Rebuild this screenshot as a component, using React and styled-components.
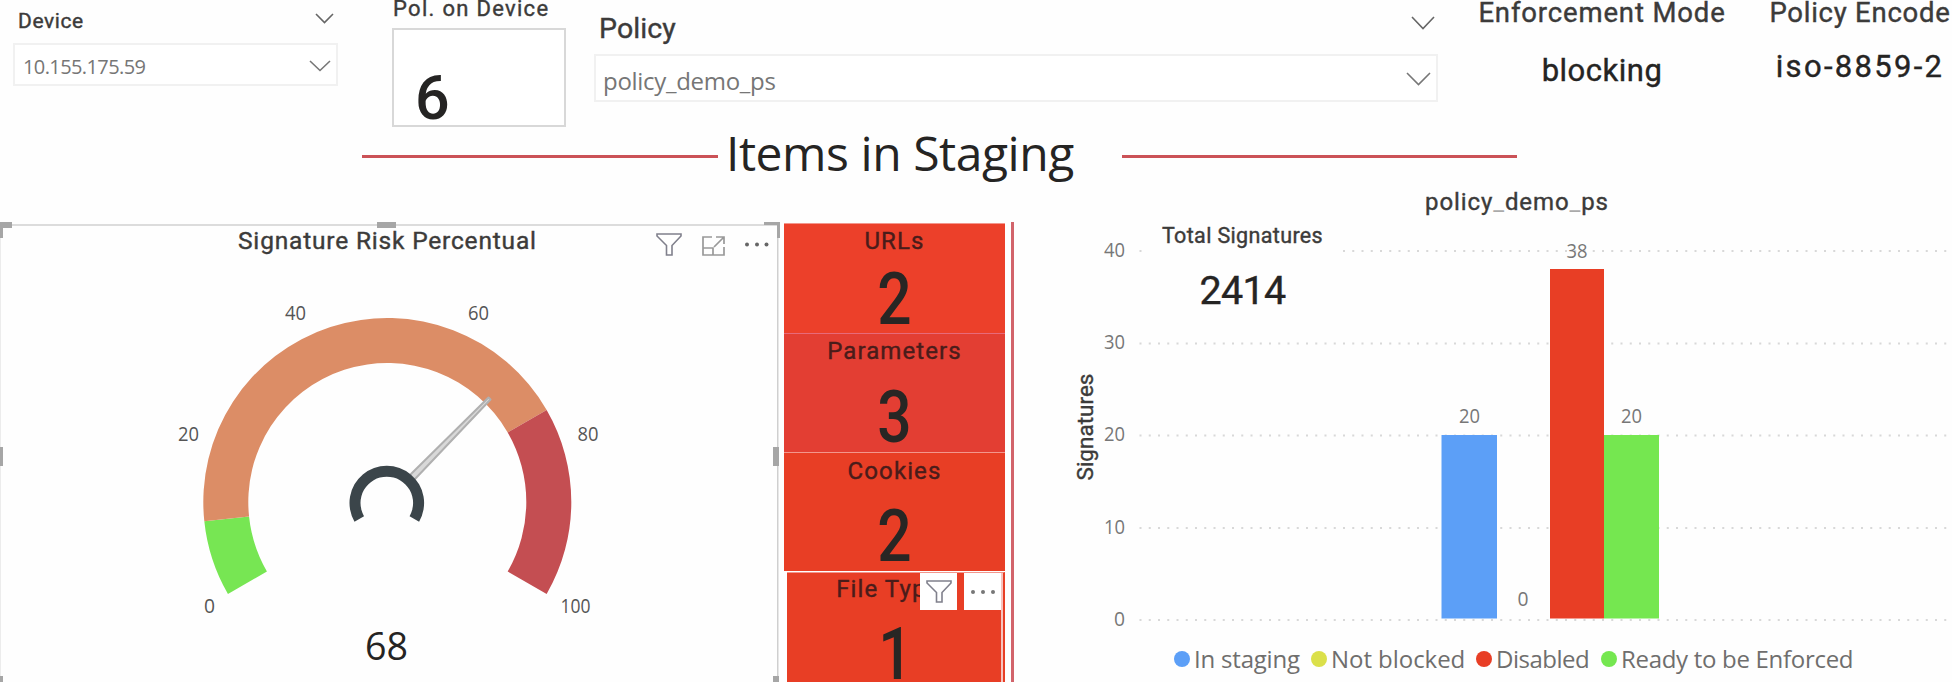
import React from "react";
import styled, { createGlobalStyle } from "styled-components";

const DIN = `Roboto, "Liberation Sans", sans-serif`;
const SEGOE = `"Open Sans", "Noto Sans", sans-serif`;

const GlobalStyle = createGlobalStyle`
  * { box-sizing: border-box; }
  html, body { margin: 0; padding: 0; }
  body { width: 1952px; height: 682px; overflow: hidden; background: #fefefe; }
`;

const Page = styled.div`
  width: 1952px;
  height: 682px;
  overflow: hidden;
  display: flex;
  flex-direction: column;
  background: #fefefe;
  font-family: ${DIN};
  color: #252423;
`;

const Header = styled.header`
  height: 128px;
  flex: none;
  display: flex;
  align-items: flex-start;
`;

const Field = styled.section`
  display: flex;
  flex-direction: column;
  flex: none;
  width: ${(p) => p.$width}px;
  margin-left: ${(p) => p.$gap}px;
`;

const FieldHead = styled.div`
  display: flex;
  justify-content: space-between;
  height: ${(p) => p.$height}px;
  padding: ${(p) => p.$pad};
`;

const DinLabel = styled.span`
  font-size: ${(p) => p.$size}px;
  font-weight: ${(p) => p.$weight || 400};
  letter-spacing: ${(p) => p.$spacing || 0}px;
  line-height: ${(p) => p.$line}px;
  white-space: nowrap;
  color: ${(p) => p.$color || "#3c3b3a"};
  -webkit-text-stroke: ${(p) => (p.$weight ? 0 : 0.4)}px currentColor;
`;

const Select = styled.div`
  display: flex;
  justify-content: space-between;
  height: ${(p) => p.$height}px;
  padding: ${(p) => p.$pad};
  border: 2px solid #f1f1f1;
  background: #fff;
`;

const SelectValue = styled.span`
  font-family: ${SEGOE};
  font-size: ${(p) => p.$size}px;
  letter-spacing: ${(p) => p.$spacing}px;
  line-height: ${(p) => p.$line}px;
  color: #767676;
`;

const CountBox = styled.div`
  height: 99px;
  padding: 41px 0 0 21px;
  border: 2px solid #d8d8d8;
  background: #fff;
  display: flex;
`;

const Metric = styled.section`
  display: flex;
  flex-direction: column;
  align-items: center;
  flex: none;
  width: ${(p) => p.$width}px;
  margin-left: ${(p) => p.$gap}px;
  gap: ${(p) => p.$space}px;
`;

const SectionHeading = styled.div`
  height: 56px;
  flex: none;
  display: flex;
  align-items: center;
  padding-left: 362px;
`;

const Rule = styled.div`
  width: ${(p) => p.$width}px;
  height: 3px;
  background: #cb5257;
`;

const HeadingText = styled.h1`
  margin: 0;
  padding: 0 0 6px 8px;
  width: 404px;
  font-family: ${SEGOE};
  font-size: 48px;
  font-weight: 400;
  line-height: 52px;
  letter-spacing: -0.45px;
  white-space: nowrap;
`;

const Main = styled.main`
  flex: 1;
  display: flex;
  align-items: flex-start;
`;

const GaugePanel = styled.section`
  width: 780px;
  height: 460px;
  margin-top: 38px;
  flex: none;
`;

const Stack = styled.section`
  width: 221px;
  height: 459px;
  margin: 39px 0 0 4px;
  flex: none;
  display: flex;
  flex-direction: column;
`;

const Tile = styled.div`
  position: relative;
  height: ${(p) => p.$height}px;
  flex: none;
  display: flex;
  flex-direction: column;
  align-items: center;
  padding-top: ${(p) => p.$top}px;
  border-top: 1px solid ${(p) => p.$edge};
  background: ${(p) => p.$color};
`;

const InsetTile = styled(Tile)`
  margin: 1px 0 0 3px;
  border-right: 2px solid #e83e25;
  overflow: hidden;
`;

const TileValue = styled.span`
  font-size: 72px;
  font-weight: 500;
  line-height: 60px;
  margin-top: ${(p) => p.$gap}px;
  transform: scaleX(0.84);
  color: #282624;
`;

const TileTools = styled.div`
  position: absolute;
  top: 0;
  right: 0;
  height: 110px;
  border-right: 2px solid #f6c4c0;
  display: flex;
  gap: 7px;
`;

const ToolButton = styled.button`
  width: 37px;
  height: 37px;
  padding: 0;
  border: 0;
  background: #fff;
  display: flex;
  align-items: center;
  justify-content: center;
`;

const Divider = styled.div`
  width: 3px;
  height: 460px;
  margin: 38px 0 0 6px;
  flex: none;
  background: #d2646b;
`;

const ChartPanel = styled.section`
  position: relative;
  width: 938px;
  height: 498px;
  flex: none;
`;

const TotalCard = styled.div`
  position: absolute;
  left: 131px;
  top: 37px;
  width: 195px;
  height: 100px;
  display: flex;
  flex-direction: column;
  align-items: center;
  gap: 17px;
  background: #fefefe;
`;

const Legend = styled.div`
  display: flex;
  padding-left: 160px;
  margin-top: -2px;
`;

const LegendItem = styled.div`
  display: flex;
  align-items: center;
  gap: 4px;
  width: ${(p) => p.$width}px;
  height: 34px;
  font-family: ${SEGOE};
  font-size: 24px;
  letter-spacing: ${(p) => p.$spacing}px;
  line-height: 32px;
  white-space: nowrap;
  color: #6f6e6d;

  &::before {
    content: "";
    flex: none;
    width: 16px;
    height: 16px;
    border-radius: 50%;
    background: ${(p) => p.$color};
  }
`;

const Drawing = styled.svg`
  display: block;
  flex: none;
  margin: ${(p) => p.$margin || 0};
`;

const ChartTitle = styled.text`
  font-family: ${DIN};
  font-size: ${(p) => p.$size}px;
  fill: #3c3b3a;
  stroke: #3c3b3a;
  stroke-width: 0.4px;
`;

function Chevron({ w, h, color = "#666", margin }) {
  return (
    <Drawing width={w} height={h} $margin={margin} fill="none" stroke={color} strokeWidth="1.6">
      <path d={`M1 1L${w / 2} ${h - 1.5}L${w - 1} 1`} />
    </Drawing>
  );
}

function FunnelShape({ x = 0, y = 0 }) {
  return (
    <path
      transform={`translate(${x} ${y})`}
      d="M1 1H25V3L16 12.5V22H10.500V12.500L1 3Z"
      fill="#fff"
      stroke="#80808c"
      strokeWidth="1.6"
    />
  );
}

const polar = (cx, cy, r, pct) => {
  const a = ((210 - pct * 2.4) * Math.PI) / 180;
  return `${(cx + r * Math.cos(a)).toFixed(2)} ${(cy - r * Math.sin(a)).toFixed(2)}`;
};

const ring = (cx, cy, ro, ri, from, to) => {
  const large = (to - from) * 2.4 > 180 ? 1 : 0;
  return `M${polar(cx, cy, ro, from)}A${ro} ${ro} 0 ${large} 1 ${polar(cx, cy, ro, to)}L${polar(cx, cy, ri, to)}A${ri} ${ri} 0 ${large} 0 ${polar(cx, cy, ri, from)}Z`;
};

const gaugeTicks = [
  ["0", 204, 390.5, 10],
  ["20", 178, 218.5, 20],
  ["40", 285, 97.5, 20],
  ["60", 468, 97.5, 20],
  ["80", 577.5, 218.5, 20],
  ["100", 560.5, 390.5, 29],
];

function Gauge() {
  return (
    <GaugePanel>
      <Drawing width="780" height="460">
        <rect x="0" y="2" width="779" height="2" fill="#dcdcdc" />
        <rect x="0" y="4" width="1" height="456" fill="#ececec" />
        <rect x="777" y="4" width="1.5" height="456" fill="#cfcfcf" />
        <g fill="#a6a6a6">
          <path d="M0 0H12V6H3V16H0Z" />
          <rect x="377" y="0" width="19" height="6" />
          <path d="M764 0H780V16H777V3H764Z" />
          <rect x="0" y="225" width="3" height="19" />
          <rect x="0" y="454" width="3" height="6" />
          <rect x="773" y="225" width="6" height="19" />
          <rect x="773" y="454" width="6" height="6" />
        </g>
        <ChartTitle x="238" y="27" $size={24.5} textLength="298">
          Signature Risk Percentual
        </ChartTitle>
        <FunnelShape x={656} y={11} />
        <g fill="none" stroke="#999" strokeWidth="1.700">
          <path d="M712 15H703V33H724V25M703 26H713V33M716 15H724V22M724 15L714 25" />
        </g>
        <g fill="#666">
          <circle cx="747" cy="22.500" r="2" />
          <circle cx="757" cy="22.500" r="2" />
          <circle cx="766.500" cy="22.500" r="2" />
        </g>
        <path d={ring(387.3, 280, 184, 139, 0, 10)} fill="#77e653" />
        <path d={ring(387.3, 280, 184, 139, 10, 75)} fill="#dc8d66" />
        <path d={ring(387.3, 280, 184, 139, 75, 100)} fill="#c44e52" />
        <path
          d="M410.500 252.500L488.500 175.500L490.500 177.500L415 257"
          fill="#d8d8d8"
          stroke="#b0b0b0"
          strokeWidth="2"
          strokeLinejoin="round"
        />
        <path d={ring(386.8, 281, 37.3, 26.3, 0, 100)} fill="#3b454a" />
        <g fontFamily={SEGOE} fontSize="20" fill="#555">
          {gaugeTicks.map(([t, x, y, w]) => (
            <text key={t} x={x} y={y} textLength={w + 1} lengthAdjust="spacingAndGlyphs">{t}</text>
          ))}
        </g>
        <text x="365" y="438" fontFamily={SEGOE} fontSize="39" fill="#252423" textLength="43" lengthAdjust="spacingAndGlyphs">68</text>
      </Drawing>
    </GaugePanel>
  );
}

const gridRows = [
  ["40", 67],
  ["30", 159.5],
  ["20", 251.5],
  ["10", 344],
  ["0", 436],
];

const bars = [
  { label: "20", x: 427.5, w: 55.5, top: 251, color: "#5c9ff7", tx: 445, ty: 238.5 },
  { label: "0", x: 482, w: 0, top: 434.5, color: "#dbe04a", tx: 503.5, ty: 422 },
  { label: "38", x: 536, w: 54, top: 85, color: "#e83e25", tx: 552.5, ty: 73.5 },
  { label: "20", x: 590, w: 55, top: 251, color: "#75e750", tx: 607, ty: 238.5 },
];

const legend = [
  ["In staging", "#5c9ff7", 137, -0.2],
  ["Not blocked", "#dbe04a", 165, -0.05],
  ["Disabled", "#e83e25", 125, -0.5],
  ["Ready to be Enforced", "#75e750", 260, -0.3],
];

function SignatureChart() {
  return (
    <ChartPanel>
      <Drawing width="938" height="460">
        {gridRows.map(([t, y]) => (
          <g key={t}>
            <text
              x={t === "0" ? 100 : 90}
              y={y + 5.5}
              fontFamily={SEGOE}
              fontSize="20"
              fill="#777"
              textLength={t === "0" ? 11 : 21}
              lengthAdjust="spacingAndGlyphs"
            >
              {t}
            </text>
            <line x1="125.500" x2="933" y1={y} y2={y} stroke="#d8d8d8" strokeWidth="2" strokeDasharray="2 7.25" />
          </g>
        ))}
        {bars.map((b) => (
          <g key={b.x}>
            <rect x={b.x} y={b.top} width={b.w} height={434.5 - b.top} fill={b.color} />
            <text
              x={b.tx}
              y={b.ty}
              fontFamily={SEGOE}
              fontSize="20"
              fill="#777"
              textLength={b.label.length > 1 ? 21 : 11}
              lengthAdjust="spacingAndGlyphs"
            >
              {b.label}
            </text>
          </g>
        ))}
        <ChartTitle x="411" y="26" $size={24} textLength="183">
          policy<tspan fill="#aaa" stroke="none">_</tspan>demo<tspan fill="#aaa" stroke="none">_</tspan>ps
        </ChartTitle>
        <ChartTitle
          transform="translate(78.500 296.500) rotate(-90)"
          $size={22}
          textLength="107"
          lengthAdjust="spacingAndGlyphs"
        >
          Signatures
        </ChartTitle>
      </Drawing>
      <TotalCard>
        <DinLabel $size={21.5} $line={30} $spacing={0.35}>Total Signatures</DinLabel>
        <DinLabel $size={39.5} $line={46} $spacing={-0.7} $color="#252423">2414</DinLabel>
      </TotalCard>
      <Legend>
        {legend.map(([t, c, w, s]) => (
          <LegendItem key={t} $color={c} $width={w} $spacing={s}>{t}</LegendItem>
        ))}
      </Legend>
    </ChartPanel>
  );
}

const tileLabel = { $size: 24, $line: 28, $spacing: 1.1, $color: "#4a1c1a" };

export default function App() {
  return (
    <Page>
      <GlobalStyle />
      <Header>
        <Field $width={325} $gap={13}>
          <FieldHead $height={43} $pad="9px 4px 0 5px">
            <DinLabel $size={21} $line={24} $spacing={0.6}>Device</DinLabel>
            <Chevron w={19} h={11} margin="4px 0 0" />
          </FieldHead>
          <Select $height={43} $pad="0 5px 0 8px">
            <SelectValue $size={20} $spacing={-0.6} $line={43}>10.155.175.59</SelectValue>
            <Chevron w={22} h={12} color="#777" margin="15px 0 0" />
          </Select>
        </Field>
        <Field $width={174} $gap={54}>
          <FieldHead $height={28} $pad="0 0 0 1px">
            <DinLabel $size={22} $line={17} $spacing={1.3}>Pol. on Device</DinLabel>
          </FieldHead>
          <CountBox>
            <DinLabel $size={61} $line={54} $weight={500} $color="#252423">6</DinLabel>
          </CountBox>
        </Field>
        <Field $width={844} $gap={28}>
          <FieldHead $height={54} $pad="13px 3px 0 5px">
            <DinLabel $size={28.5} $line={31} $spacing={0.1}>Policy</DinLabel>
            <Chevron w={24} h={14} margin="3px 0 0" />
          </FieldHead>
          <Select $height={48} $pad="0 5px 0 7px">
            <SelectValue $size={24} $spacing={-0.3} $line={49}>policy_demo_ps</SelectValue>
            <Chevron w={25} h={14} color="#777" margin="16px 0 0" />
          </Select>
        </Field>
        <Metric $width={250} $gap={39} $space={29}>
          <DinLabel $size={27.5} $line={26} $spacing={0.85}>Enforcement Mode</DinLabel>
          <DinLabel $size={31} $line={32} $color="#252423" $spacing={0.5}>blocking</DinLabel>
        </Metric>
        <Metric $width={184} $gap={41} $space={25}>
          <DinLabel $size={27.5} $line={26} $spacing={0.75}>Policy Encode</DinLabel>
          <DinLabel $size={31} $line={32} $color="#252423" $spacing={2.3}>iso-8859-2</DinLabel>
        </Metric>
      </Header>
      <SectionHeading>
        <Rule $width={356} />
        <HeadingText>Items in Staging</HeadingText>
        <Rule $width={395} />
      </SectionHeading>
      <Main>
        <Gauge />
        <Stack>
          <Tile $height={110} $top={3} $color="#ec402a" $edge="#f3968c">
            <DinLabel {...tileLabel}>URLs</DinLabel>
            <TileValue $gap={15}>2</TileValue>
          </Tile>
          <Tile $height={119} $top={3} $color="#e33e33" $edge="#e8697a">
            <DinLabel {...tileLabel}>Parameters</DinLabel>
            <TileValue $gap={23}>3</TileValue>
          </Tile>
          <Tile $height={119} $top={4} $color="#e83e25" $edge="#f3968c">
            <DinLabel {...tileLabel}>Cookies</DinLabel>
            <TileValue $gap={22}>2</TileValue>
          </Tile>
          <InsetTile $height={111} $top={2} $color="#e83e25" $edge="#f3968c">
            <DinLabel {...tileLabel}>File Types</DinLabel>
            <TileValue $gap={22}>1</TileValue>
            <TileTools>
              <ToolButton>
                <Drawing width="26" height="24"><FunnelShape /></Drawing>
              </ToolButton>
              <ToolButton>
                <Drawing width="26" height="6" fill="#777">
                  <circle cx="3" cy="3" r="2" />
                  <circle cx="13" cy="3" r="2" />
                  <circle cx="23" cy="3" r="2" />
                </Drawing>
              </ToolButton>
            </TileTools>
          </InsetTile>
        </Stack>
        <Divider />
        <SignatureChart />
      </Main>
    </Page>
  );
}
